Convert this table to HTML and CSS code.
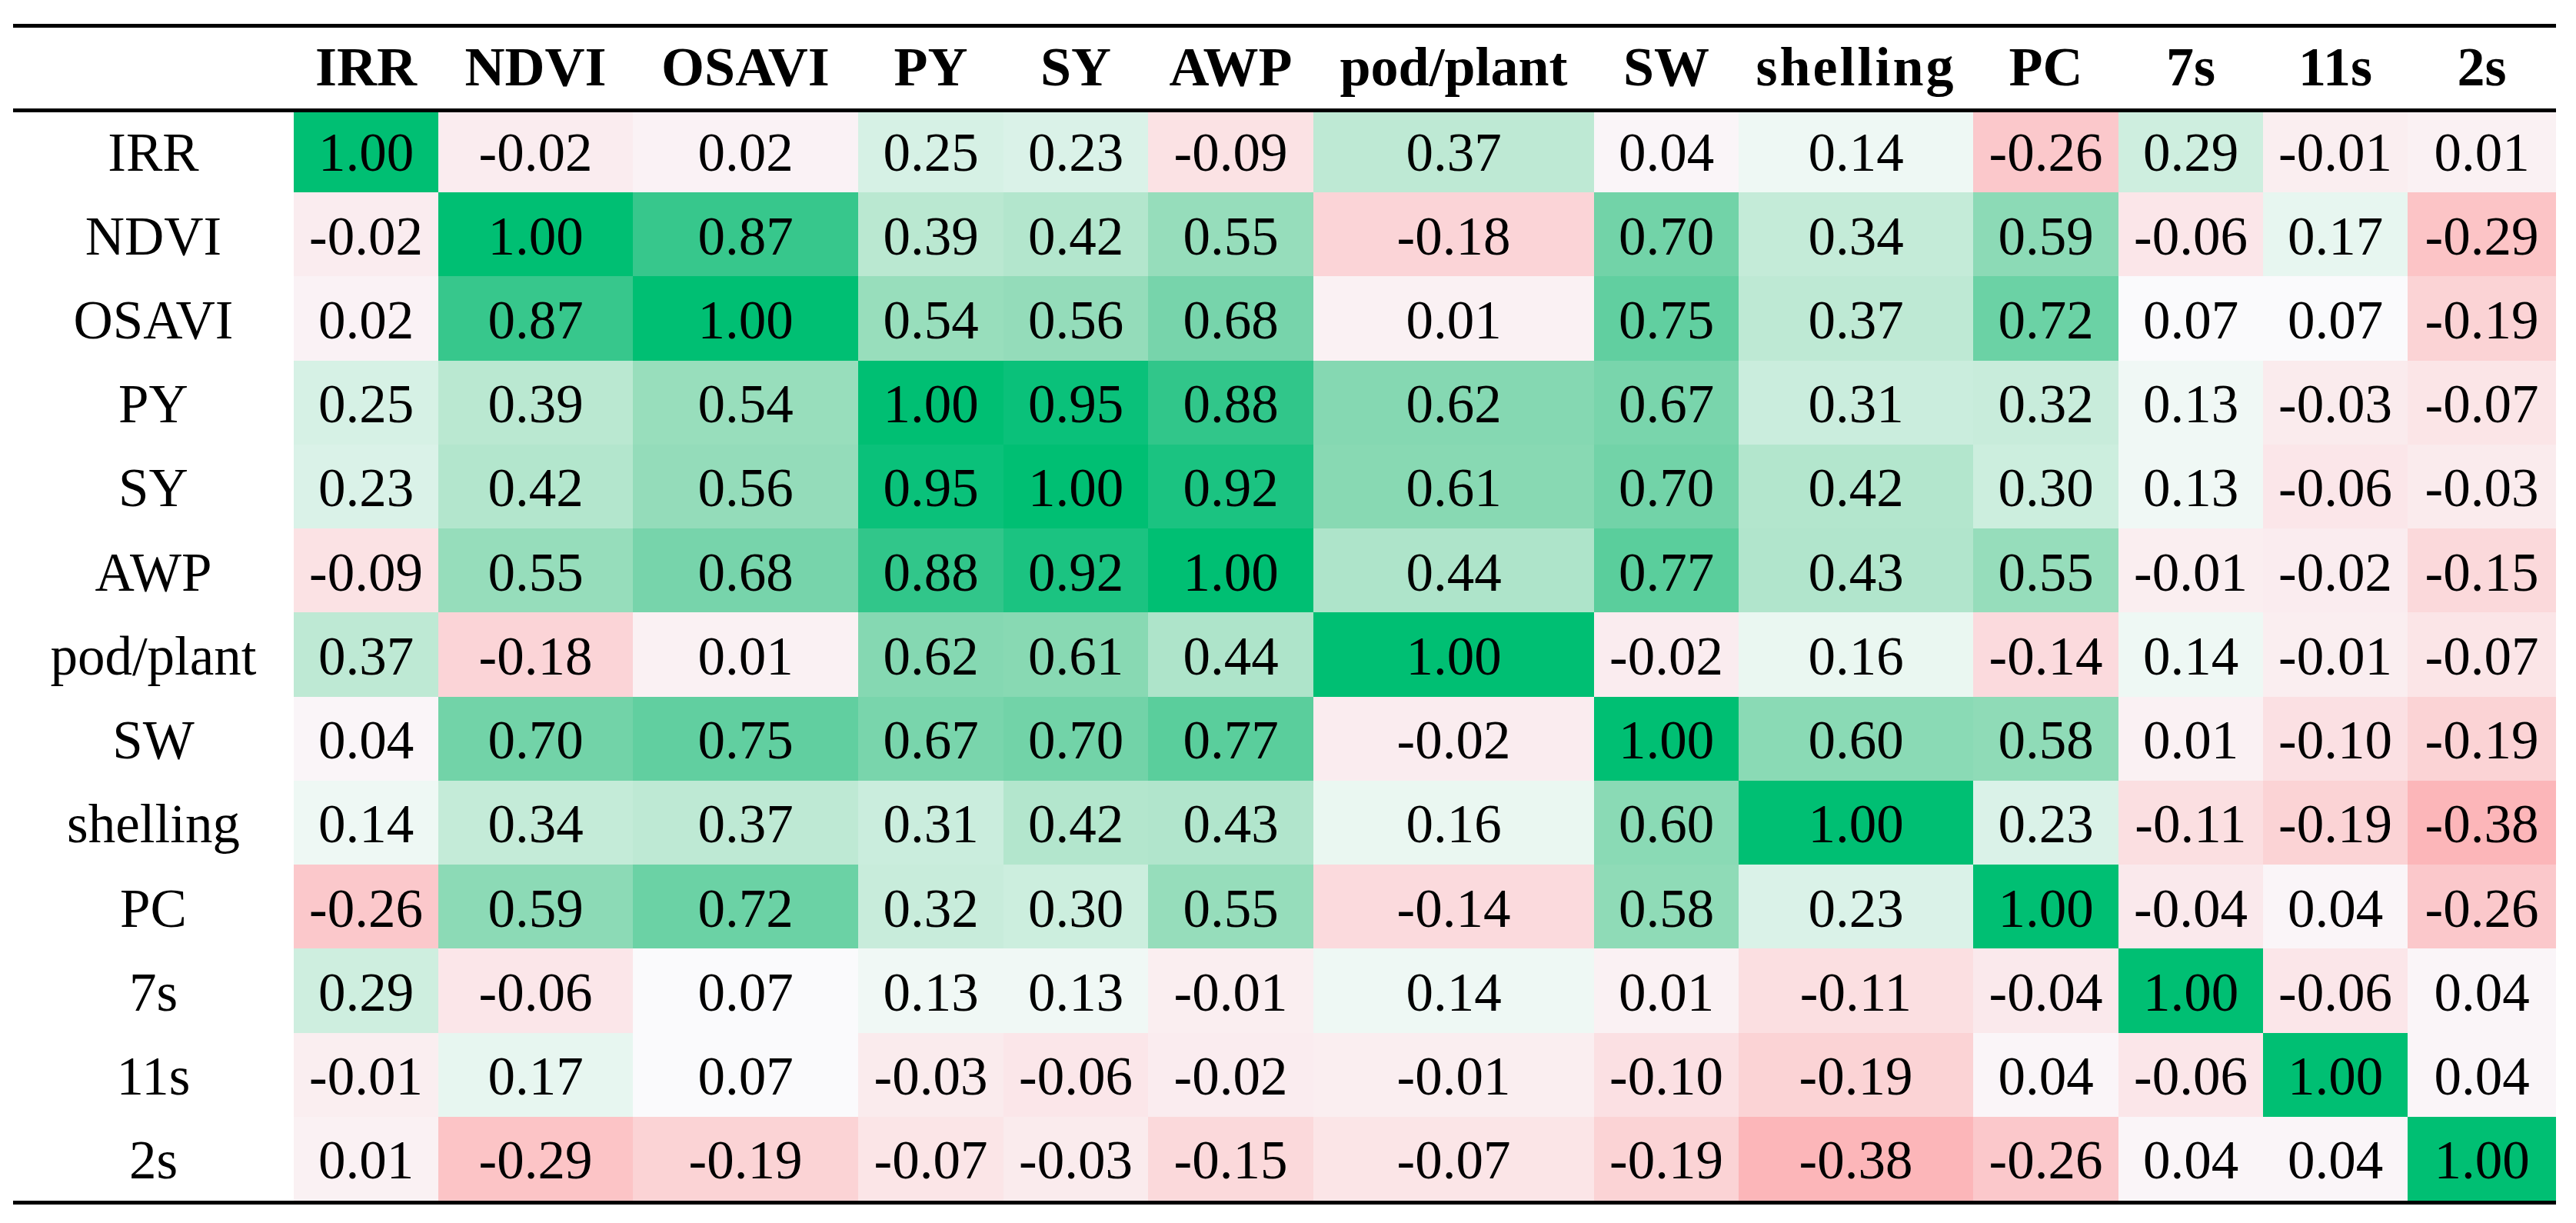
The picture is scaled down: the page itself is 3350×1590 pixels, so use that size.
FILE: index.html
```html
<!DOCTYPE html>
<html lang="en">
<head>
<meta charset="utf-8">
<title>Correlation matrix</title>
<link rel="stylesheet" href="styles.css">
</head>
<body>
<div class="matrix">
  <div class="row head">
    <div class="lab"></div><div>IRR</div><div>NDVI</div><div>OSAVI</div><div>PY</div><div>SY</div><div>AWP</div><div>pod/plant</div><div>SW</div><div class="spaced">shelling</div><div>PC</div><div>7s</div><div>11s</div><div>2s</div>
  </div>
  <div class="row first">
    <div class="lab">IRR</div><div class="c">1.00</div><div class="c">-0.02</div><div class="c">0.02</div><div class="c">0.25</div><div class="c">0.23</div><div class="c">-0.09</div><div class="c">0.37</div><div class="c">0.04</div><div class="c">0.14</div><div class="c">-0.26</div><div class="c">0.29</div><div class="c">-0.01</div><div class="c">0.01</div>
  </div>
  <div class="row">
    <div class="lab">NDVI</div><div class="c">-0.02</div><div class="c">1.00</div><div class="c">0.87</div><div class="c">0.39</div><div class="c">0.42</div><div class="c">0.55</div><div class="c">-0.18</div><div class="c">0.70</div><div class="c">0.34</div><div class="c">0.59</div><div class="c">-0.06</div><div class="c">0.17</div><div class="c">-0.29</div>
  </div>
  <div class="row">
    <div class="lab">OSAVI</div><div class="c">0.02</div><div class="c">0.87</div><div class="c">1.00</div><div class="c">0.54</div><div class="c">0.56</div><div class="c">0.68</div><div class="c">0.01</div><div class="c">0.75</div><div class="c">0.37</div><div class="c">0.72</div><div class="c">0.07</div><div class="c">0.07</div><div class="c">-0.19</div>
  </div>
  <div class="row">
    <div class="lab">PY</div><div class="c">0.25</div><div class="c">0.39</div><div class="c">0.54</div><div class="c">1.00</div><div class="c">0.95</div><div class="c">0.88</div><div class="c">0.62</div><div class="c">0.67</div><div class="c">0.31</div><div class="c">0.32</div><div class="c">0.13</div><div class="c">-0.03</div><div class="c">-0.07</div>
  </div>
  <div class="row">
    <div class="lab">SY</div><div class="c">0.23</div><div class="c">0.42</div><div class="c">0.56</div><div class="c">0.95</div><div class="c">1.00</div><div class="c">0.92</div><div class="c">0.61</div><div class="c">0.70</div><div class="c">0.42</div><div class="c">0.30</div><div class="c">0.13</div><div class="c">-0.06</div><div class="c">-0.03</div>
  </div>
  <div class="row">
    <div class="lab">AWP</div><div class="c">-0.09</div><div class="c">0.55</div><div class="c">0.68</div><div class="c">0.88</div><div class="c">0.92</div><div class="c">1.00</div><div class="c">0.44</div><div class="c">0.77</div><div class="c">0.43</div><div class="c">0.55</div><div class="c">-0.01</div><div class="c">-0.02</div><div class="c">-0.15</div>
  </div>
  <div class="row">
    <div class="lab">pod/plant</div><div class="c">0.37</div><div class="c">-0.18</div><div class="c">0.01</div><div class="c">0.62</div><div class="c">0.61</div><div class="c">0.44</div><div class="c">1.00</div><div class="c">-0.02</div><div class="c">0.16</div><div class="c">-0.14</div><div class="c">0.14</div><div class="c">-0.01</div><div class="c">-0.07</div>
  </div>
  <div class="row">
    <div class="lab">SW</div><div class="c">0.04</div><div class="c">0.70</div><div class="c">0.75</div><div class="c">0.67</div><div class="c">0.70</div><div class="c">0.77</div><div class="c">-0.02</div><div class="c">1.00</div><div class="c">0.60</div><div class="c">0.58</div><div class="c">0.01</div><div class="c">-0.10</div><div class="c">-0.19</div>
  </div>
  <div class="row">
    <div class="lab">shelling</div><div class="c">0.14</div><div class="c">0.34</div><div class="c">0.37</div><div class="c">0.31</div><div class="c">0.42</div><div class="c">0.43</div><div class="c">0.16</div><div class="c">0.60</div><div class="c">1.00</div><div class="c">0.23</div><div class="c">-0.11</div><div class="c">-0.19</div><div class="c">-0.38</div>
  </div>
  <div class="row">
    <div class="lab">PC</div><div class="c">-0.26</div><div class="c">0.59</div><div class="c">0.72</div><div class="c">0.32</div><div class="c">0.30</div><div class="c">0.55</div><div class="c">-0.14</div><div class="c">0.58</div><div class="c">0.23</div><div class="c">1.00</div><div class="c">-0.04</div><div class="c">0.04</div><div class="c">-0.26</div>
  </div>
  <div class="row">
    <div class="lab">7s</div><div class="c">0.29</div><div class="c">-0.06</div><div class="c">0.07</div><div class="c">0.13</div><div class="c">0.13</div><div class="c">-0.01</div><div class="c">0.14</div><div class="c">0.01</div><div class="c">-0.11</div><div class="c">-0.04</div><div class="c">1.00</div><div class="c">-0.06</div><div class="c">0.04</div>
  </div>
  <div class="row">
    <div class="lab">11s</div><div class="c">-0.01</div><div class="c">0.17</div><div class="c">0.07</div><div class="c">-0.03</div><div class="c">-0.06</div><div class="c">-0.02</div><div class="c">-0.01</div><div class="c">-0.10</div><div class="c">-0.19</div><div class="c">0.04</div><div class="c">-0.06</div><div class="c">1.00</div><div class="c">0.04</div>
  </div>
  <div class="row last">
    <div class="lab">2s</div><div class="c">0.01</div><div class="c">-0.29</div><div class="c">-0.19</div><div class="c">-0.07</div><div class="c">-0.03</div><div class="c">-0.15</div><div class="c">-0.07</div><div class="c">-0.19</div><div class="c">-0.38</div><div class="c">-0.26</div><div class="c">0.04</div><div class="c">0.04</div><div class="c">1.00</div>
  </div>
</div>
<script src="script.js"></script>
</body>
</html>
```

FILE: styles.css
```css
html, body {
  margin: 0;
  padding: 0;
  background: #ffffff;
}

body {
  font-family: "Liberation Serif", "Times New Roman", serif;
  color: #000000;
}

.matrix {
  --cols: 365px 188px 253px 293px 189px 188px 215px 365px 188px 305px 189px 188px 188px 193px;
  margin: 31px 0 0 17px;
  width: 3307px;
  border-top: 5px solid #000000;
  border-bottom: 5px solid #000000;
}

.row {
  display: grid;
  grid-template-columns: var(--cols);
  height: 109.25px;
}

.row > div {
  display: flex;
  align-items: center;
  justify-content: center;
  font-size: 71px;
  line-height: 1;
  padding-top: 5px;
  box-sizing: border-box;
  white-space: nowrap;
}

.row.head {
  height: 105px;
  border-bottom: 5px solid #000000;
}

.row.head > div {
  font-weight: bold;
  font-size: 72px;
  padding-top: 0;
  padding-bottom: 3px;
}

.row.head > .spaced {
  letter-spacing: 3px;
}

.row.first {
  height: 104px;
}

.row.first > div {
  padding-top: 0;
}
```

FILE: script.js
```js
(function () {
  var pos = [
    [0.07, [250, 250, 252]],
    [0.14, [238, 248, 244]],
    [0.25, [214, 241, 229]],
    [0.37, [190, 233, 212]],
    [0.55, [150, 221, 187]],
    [0.70, [114, 211, 168]],
    [0.87, [55, 199, 140]],
    [0.95, [10, 193, 122]],
    [1.00, [0, 191, 115]]
  ];
  var neg = [
    [-0.38, [252, 182, 185]],
    [0.07, [250, 250, 252]]
  ];
  function interp(list, v) {
    if (v <= list[0][0]) return list[0][1];
    for (var i = 1; i < list.length; i++) {
      if (v <= list[i][0]) {
        var a = list[i - 1], b = list[i];
        var t = (v - a[0]) / (b[0] - a[0]);
        return [0, 1, 2].map(function (k) {
          return Math.round(a[1][k] + (b[1][k] - a[1][k]) * t);
        });
      }
    }
    return list[list.length - 1][1];
  }
  var cells = document.querySelectorAll('.c');
  for (var i = 0; i < cells.length; i++) {
    var v = parseFloat(cells[i].textContent);
    var c = v >= 0.07 ? interp(pos, v) : interp(neg, v);
    cells[i].style.backgroundColor = 'rgb(' + c.join(',') + ')';
  }
})();
```
